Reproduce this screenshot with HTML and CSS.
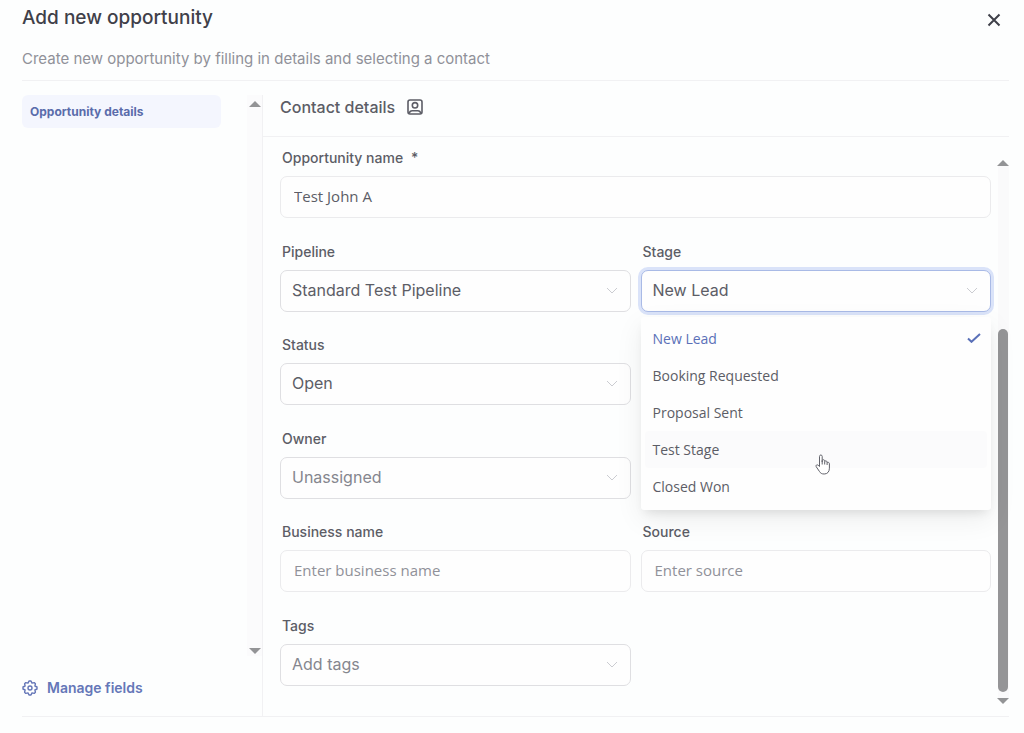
FILE: index.html
```html
<!doctype html>
<html lang="en">
<head>
    <meta charset="utf-8">
    <title>Add new opportunity</title>
    <link rel="stylesheet" href="styles.css">
</head>
<body>
<div class="modal">
    <header class="modal-header">
        <div>
            <h1>Add new opportunity</h1>
            <p>Create new opportunity by filling in details and selecting a contact</p>
        </div>
        <button type="button" class="close" aria-label="Close">
            <svg width="14" height="14" viewBox="0 0 14 14"><path d="M1.5 1.5l11 11M12.5 1.5l-11 11"/></svg>
        </button>
    </header>

    <div class="modal-body">
        <aside class="sidebar">
            <div class="sidebar-scroll">
                <nav>
                    <a href="#details" class="nav-item">Opportunity details</a>
                </nav>
                <div class="scrollbar light">
                    <svg width="12" height="6" viewBox="0 0 12 6"><path d="M6 0l6 6H0z"/></svg>
                    <div class="track"></div>
                    <svg width="12" height="6" viewBox="0 0 12 6"><path d="M0 0h12L6 6z"/></svg>
                </div>
            </div>
            <a href="#fields" class="manage">
                <svg width="16" height="16" viewBox="0 0 16 16">
                    <path d="M7 1h2l1 2.100 2.200-.5 1.200 1.200-.5 2.200L15 7v2l-2.100 1 .5 2.200-1.200 1.200-2.200-.5L9 15H7l-1-2.100-2.200.5-1.200-1.200.5-2.200L1 9V7l2.100-1-.5-2.200 1.200-1.200 2.200.5z"/>
                    <circle cx="8" cy="8" r="2"/>
                </svg>
                Manage fields
            </a>
        </aside>

        <main class="content" id="details">
            <div class="section-title">
                <h2>Contact details</h2>
                <svg width="16" height="16" viewBox="0 0 16 16">
                    <rect x="1" y="1" width="14" height="14" rx="2"/>
                    <circle cx="8" cy="6.3" r="2.7"/>
                    <path d="M2.2 14.4c.4-2 1.600-2.700 3-2.700h5.600c1.400 0 2.600.7 3 2.700"/>
                </svg>
            </div>

            <div class="form-scroll">
                <form class="fields">
                    <div class="field wide">
                        <label for="name">Opportunity name <span class="required">*</span></label>
                        <input type="text" id="name" value="Test John A">
                    </div>

                    <div class="field">
                        <label for="pipeline">Pipeline</label>
                        <div class="select">
                            <select id="pipeline"><option>Standard Test Pipeline</option></select>
                            <svg width="12" height="7" viewBox="0 0 12 7"><path d="M1 1l5 5 5-5"/></svg>
                        </div>
                    </div>
                    <div class="field">
                        <label for="stage">Stage</label>
                        <div class="select open">
                            <select id="stage"><option>New Lead</option></select>
                            <svg width="12" height="7" viewBox="0 0 12 7"><path d="M1 1l5 5 5-5"/></svg>
                            <ul class="menu" role="listbox" aria-label="Stage">
                                <li role="option" aria-selected="true" class="selected">
                                    New Lead
                                    <svg class="check" width="14" height="10" viewBox="0 0 14 10"><path d="M1 5.500l3.500 3.300L13 1"/></svg>
                                </li>
                                <li role="option">Booking Requested</li>
                                <li role="option">Proposal Sent</li>
                                <li role="option" class="hover">
                                    Test Stage
                                    <svg class="pointer" width="16" height="21" viewBox="0 0 16 21">
                                        <path d="M4.500 12.500V2.400c0-1.900 2.700-1.900 2.700 0v5.400-1.300c.3-1.100 2.300-1 2.500.2v.8c.5-.9 2.200-.7 2.400.4v.8c.5-.7 2.300-.5 2.300 1v4.500c0 3.600-2 5.800-5.200 5.800-2.500 0-3.700-.8-4.800-2.600L1.200 12.700c-.8-1.400.8-2.500 1.900-1.500z"/>
                                        <path d="M7.200 7v3.500M9.700 7.500v3M12.100 8.500v2.500"/>
                                    </svg>
                                </li>
                                <li role="option">Closed Won</li>
                            </ul>
                        </div>
                    </div>

                    <div class="field left">
                        <label for="status">Status</label>
                        <div class="select">
                            <select id="status"><option>Open</option></select>
                            <svg width="12" height="7" viewBox="0 0 12 7"><path d="M1 1l5 5 5-5"/></svg>
                        </div>
                    </div>

                    <div class="field left">
                        <label for="owner">Owner</label>
                        <div class="select">
                            <select id="owner" class="empty"><option>Unassigned</option></select>
                            <svg width="12" height="7" viewBox="0 0 12 7"><path d="M1 1l5 5 5-5"/></svg>
                        </div>
                    </div>

                    <div class="field left">
                        <label for="business">Business name</label>
                        <input type="text" id="business" placeholder="Enter business name">
                    </div>
                    <div class="field">
                        <label for="source">Source</label>
                        <input type="text" id="source" placeholder="Enter source">
                    </div>

                    <div class="field left">
                        <label for="tags">Tags</label>
                        <div class="select">
                            <select id="tags" class="empty"><option>Add tags</option></select>
                            <svg width="12" height="7" viewBox="0 0 12 7"><path d="M1 1l5 5 5-5"/></svg>
                        </div>
                    </div>
                </form>
                <div class="scrollbar">
                    <svg width="12" height="6" viewBox="0 0 12 6"><path d="M6 0l6 6H0z"/></svg>
                    <div class="track"><div class="thumb"></div></div>
                    <svg width="12" height="6" viewBox="0 0 12 6"><path d="M0 0h12L6 6z"/></svg>
                </div>
            </div>
        </main>
    </div>
</div>
</body>
</html>
```
FILE: styles.css
```css
* {
    box-sizing: border-box;
}
body {
    margin: 0;
    background: #fdfefe;
    color: #5c5d66;
    font-family: Inter, "Liberation Sans", sans-serif;
    font-size: 14px;
}
svg {
    fill: none;
    stroke: currentColor;
    flex: none;
}
a {
    text-decoration: none;
}
.modal {
    display: flex;
    flex-direction: column;
    min-height: 100vh;
    padding: 0 15px 16px 22px;
}

/* header */
.modal-header {
    display: flex;
    justify-content: space-between;
    align-items: flex-start;
    height: 81px;
    padding-top: 6px;
    border-bottom: 1px solid #f1f1f3;
}
h1 {
    margin: 0;
    font-size: 19px;
    line-height: 24px;
    font-weight: 500;
    color: #3f4049;
}
.modal-header p {
    margin: 19px 0 0;
    font-size: 15px;
    line-height: 20px;
    color: #909199;
}
.close {
    display: flex;
    padding: 7px 8px;
    border: 0;
    background: none;
    color: #3f4049;
    stroke-width: 2;
    cursor: pointer;
}

.modal-body {
    flex: 1;
    display: flex;
    padding-top: 14px;
    border-bottom: 1px solid #f1f1f3;
}

/* left column */
.sidebar {
    display: flex;
    flex-direction: column;
    width: 241px;
    border-right: 1px solid #f1f1f3;
}
.sidebar-scroll {
    flex: 1;
    display: flex;
    justify-content: space-between;
}
.nav-item {
    display: block;
    width: 199px;
    padding: 0 8px;
    border-radius: 6px;
    background: #f4f6fe;
    color: #5a6cab;
    font-size: 12px;
    line-height: 33px;
    font-weight: 700;
}
.manage {
    display: flex;
    align-items: center;
    gap: 9px;
    padding: 22px 0 18px;
    line-height: 20px;
    font-weight: 600;
    color: #6577b8;
}
.manage svg {
    stroke-width: 1.4;
    stroke-linejoin: round;
}

/* scrollbars */
.scrollbar {
    display: flex;
    flex-direction: column;
    align-items: center;
    width: 12px;
}
.scrollbar svg {
    fill: #939496;
    stroke: none;
}
.track {
    flex: 1;
    display: flex;
    align-items: flex-end;
    width: 11px;
    padding-bottom: 6px;
    background: #fafafb;
}
.thumb {
    width: 10px;
    height: 69%;
    border-radius: 5px;
    background: #959597;
}
.light {
    width: 15px;
    padding: 6px 0 2px;
    background: #fbfbfc;
}
.light .track {
    background: none;
}

/* right column */
.content {
    flex: 1;
    display: flex;
    flex-direction: column;
}
.section-title {
    display: flex;
    align-items: center;
    gap: 12px;
    height: 42px;
    padding: 0 17px 17px;
    border-bottom: 1px solid #f1f1f3;
}
.section-title svg {
    stroke-width: 1.6;
}
h2 {
    margin: 0;
    font-size: 16px;
    line-height: 24px;
    font-weight: 500;
}
.form-scroll {
    flex: 1;
    display: flex;
    gap: 6px;
    padding-left: 17px;
}
.form-scroll .scrollbar {
    padding: 23px 0 12px;
}
.fields {
    flex: 1;
    display: grid;
    grid-template-columns: 1fr 1fr;
    column-gap: 10px;
    align-content: space-between;
    padding: 11px 0 30px;
}
.wide {
    grid-column: 1 / 3;
}
.left {
    grid-column: 1;
}
.field label {
    display: block;
    padding-left: 2px;
    margin-bottom: 8px;
    line-height: 20px;
    font-weight: 500;
}
.required {
    margin-left: 4px;
}
.field input, .field select {
    display: block;
    width: 100%;
    height: 42px;
    border: 1px solid #ebebed;
    border-radius: 7px;
    background: #fefefe;
    color: #5c5d66;
}
.field input {
    padding: 0 13px 2px;
    font: 15px "Open Sans", "Noto Sans", sans-serif;
}
.field input::placeholder {
    color: #909199;
}
.field select {
    appearance: none;
    padding: 0 11px 2px;
    border-color: #dfdfe2;
    font: 16px Inter, "Liberation Sans", sans-serif;
}
.field .empty {
    color: #85868e;
}
.select {
    position: relative;
}
.select > svg {
    position: absolute;
    right: 13px;
    top: 17px;
    color: #cbccd1;
    pointer-events: none;
}
.open select {
    border-color: #a9bae6;
    box-shadow: 0 0 0 3px #dae3f9;
}

/* stage list */
.menu {
    position: absolute;
    left: 0;
    right: 0;
    top: 47px;
    z-index: 1;
    margin: 0;
    padding: 3px 4px 5px;
    list-style: none;
    border-radius: 3px;
    background: #fefefe;
    box-shadow: 0 6px 10px -4px rgba(0, 0, 0, .1), 0 9px 28px rgba(0, 0, 0, .07);
    font: 14px "Open Sans", "Noto Sans", sans-serif;
}
.menu li {
    position: relative;
    display: flex;
    align-items: center;
    justify-content: space-between;
    height: 37px;
    padding: 0 6px 0 8px;
    border-radius: 4px;
}
.menu .selected {
    color: #5a70b8;
}
.menu .hover {
    background: #fbfbfc;
}
.check {
    stroke-width: 2;
}
.pointer {
    position: absolute;
    left: 170px;
    top: 23px;
    fill: #fff;
    stroke: #62636b;
}
```
